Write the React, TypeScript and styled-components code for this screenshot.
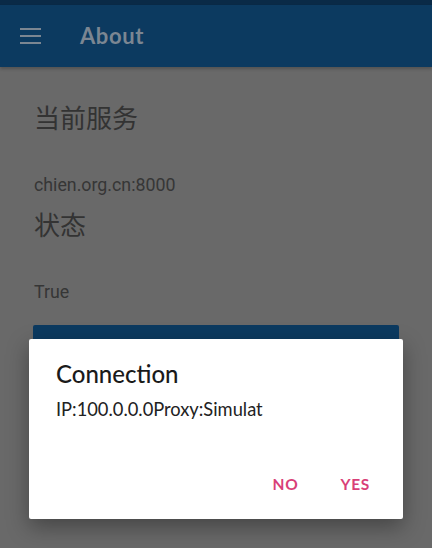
import React from "react";
import styled, { createGlobalStyle } from "styled-components";

const Global = createGlobalStyle`
  html, body { margin: 0; padding: 0; }
  body { width: 432px; height: 548px; overflow: hidden; background: #696969; }
  #root { height: 548px; }
`;

const Screen = styled.div`
  position: relative;
  width: 432px;
  height: 548px;
  background: #696969;
  font-family: Roboto, "Noto Sans CJK SC", sans-serif;
  overflow: hidden;
`;

const StatusStrip = styled.div`
  height: 5px;
  background: #0a2a47;
`;

const AppBar = styled.header`
  height: 62px;
  background: #0c3a60;
  display: flex;
  align-items: center;
  padding-left: 20px;
  gap: 39px;
  box-shadow: 0 2px 3px rgba(0, 0, 0, 0.22);
`;

const Title = styled.h1`
  margin: 0;
  font-family: Lato, sans-serif;
  font-weight: 700;
  font-size: 22px;
  line-height: 26px;
  color: #7b8692;
  letter-spacing: 0.6px;
`;

const Content = styled.main`
  padding: 34px 33px 0 34px;
  display: flex;
  flex-direction: column;
`;

const Heading = styled.div<{ $mt?: number }>`
  font-family: "Noto Sans CJK SC", sans-serif;
  font-size: 26px;
  line-height: 32px;
  color: #333333;
  margin-top: ${(p) => p.$mt ?? 0}px;
`;

const Value = styled.div<{ $mt: number }>`
  font-family: Roboto, sans-serif;
  font-size: 17.8px;
  line-height: 20px;
  color: #363636;
  margin-top: ${(p) => p.$mt}px;
`;

const BlueButton = styled.div`
  margin-top: 23px;
  height: 44px;
  background: #0c3a60;
  border-radius: 2px;
  margin-left: -1px;
`;

const Dialog = styled.div`
  position: absolute;
  left: 29px;
  top: 339px;
  width: 374px;
  height: 180px;
  background: #ffffff;
  border-radius: 2px;
  box-shadow: 0 8px 22px rgba(0, 0, 0, 0.35);
  box-sizing: border-box;
  padding: 21px 27px 0 27px;
  display: flex;
  flex-direction: column;
  font-family: Lato, sans-serif;
`;

const DialogTitle = styled.div`
  font-size: 24px;
  font-weight: 500;
  color: #1a1a1a;
  line-height: 28px;
`;

const DialogBody = styled.div`
  margin-top: 10px;
  font-size: 18.3px;
  color: #222222;
  line-height: 22px;
`;

const Actions = styled.div`
  margin-top: auto;
  margin-bottom: 25px;
  display: flex;
  justify-content: flex-end;
  gap: 42px;
  padding-right: 6px;
`;

const ActionButton = styled.button`
  border: none;
  background: none;
  padding: 0;
  font-family: Lato, sans-serif;
  font-weight: 700;
  font-size: 15.5px;
  line-height: 19px;
  color: #d93f78;
  letter-spacing: 0.7px;
`;

const Menu = () => (
  <svg width="21" height="16" viewBox="0 0 21 16">
    <g fill="#7b8692">
      <rect x="0" y="0" width="21" height="2" />
      <rect x="0" y="7" width="21" height="2" />
      <rect x="0" y="14" width="21" height="2" />
    </g>
  </svg>
);

export default function App() {
  return (
    <>
      <Global />
      <Screen>
        <StatusStrip />
        <AppBar>
          <Menu />
          <Title>About</Title>
        </AppBar>
        <Content>
          <Heading>当前服务</Heading>
          <Value $mt={42}>chien.org.cn:8000</Value>
          <Heading $mt={13}>状态</Heading>
          <Value $mt={42}>True</Value>
          <BlueButton />
        </Content>
        <Dialog>
          <DialogTitle>Connection</DialogTitle>
          <DialogBody>IP:100.0.0.0Proxy:Simulat</DialogBody>
          <Actions>
            <ActionButton>NO</ActionButton>
            <ActionButton>YES</ActionButton>
          </Actions>
        </Dialog>
      </Screen>
    </>
  );
}
